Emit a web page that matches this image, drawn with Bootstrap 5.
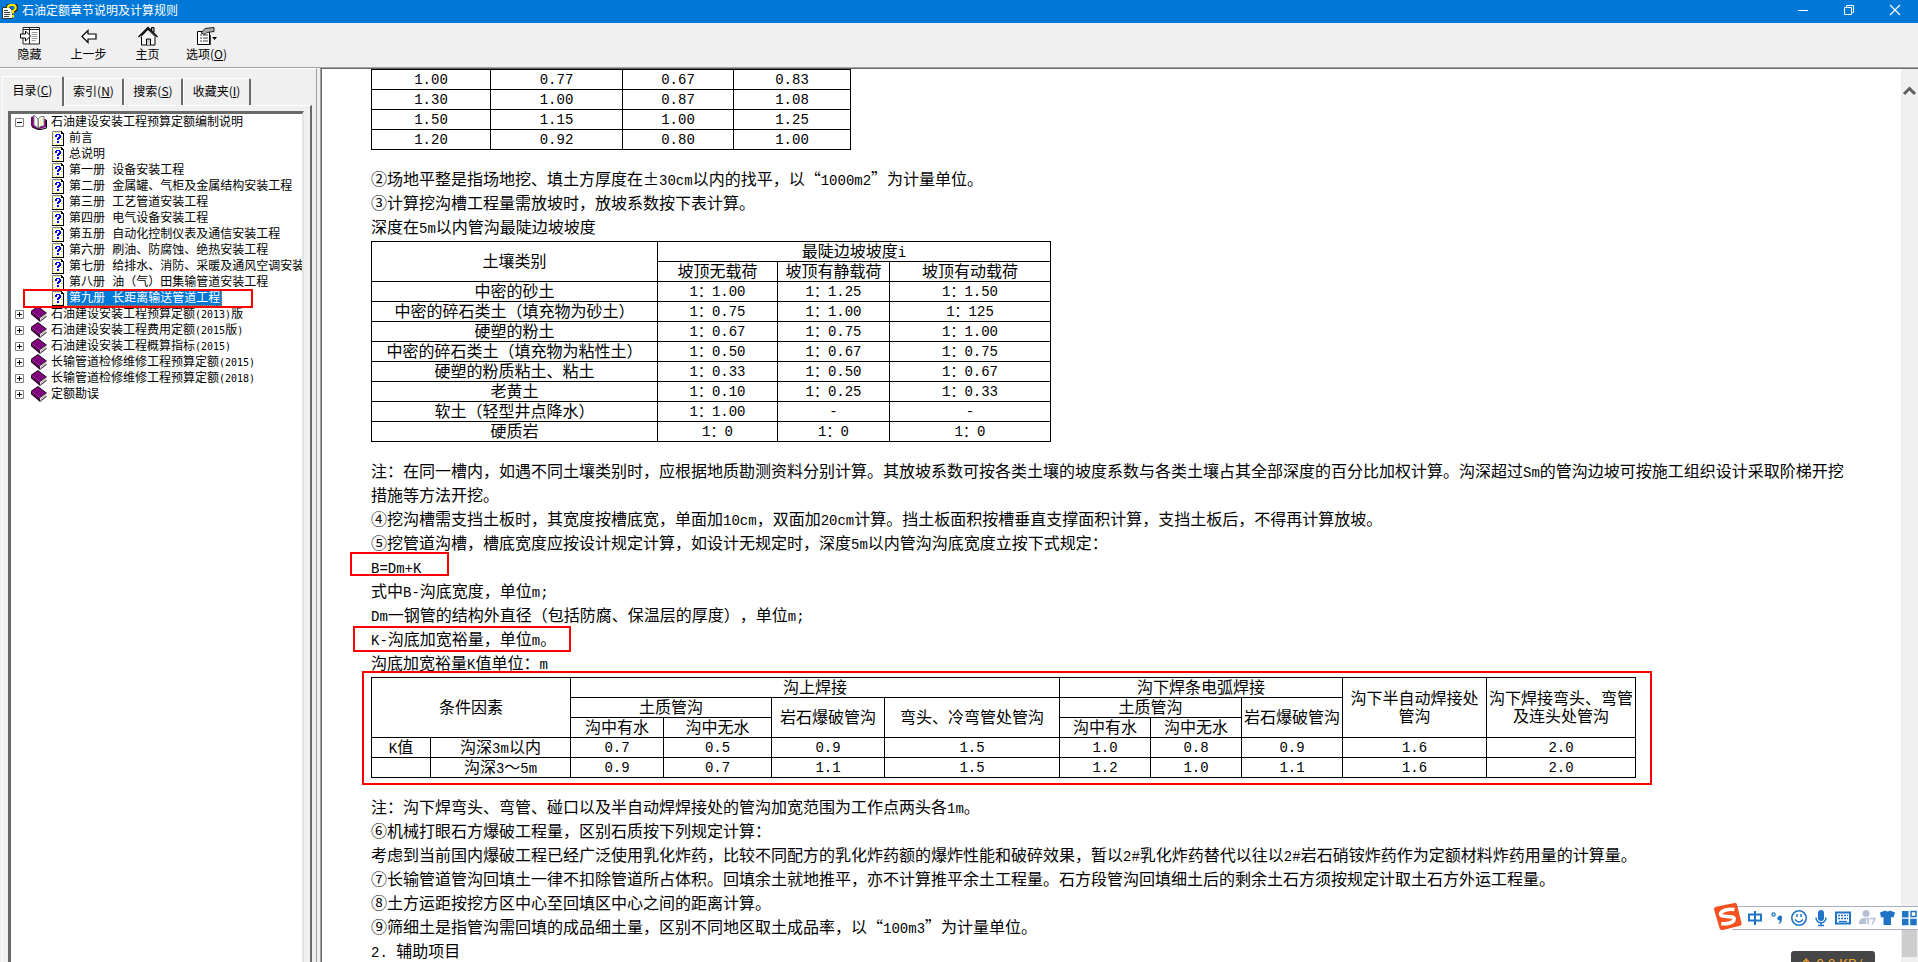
<!DOCTYPE html>
<html lang="zh-CN">
<head>
<meta charset="utf-8">
<meta name="viewport" content="width=device-width, initial-scale=1">
<title>石油定额章节说明及计算规则</title>
<link href="https://cdn.jsdelivr.net/npm/bootstrap@5.3.0/dist/css/bootstrap.min.css" rel="stylesheet">
<script src="https://cdn.jsdelivr.net/npm/bootstrap@5.3.0/dist/js/bootstrap.bundle.min.js"></script>
<style>
  :root { --face: #f0f0f0; --shade: #a0a0a0; --dark: #696969; --accent: #0078d7; }
  body { background: var(--face); color: #000; font: 12px/16px "Noto Sans CJK SC", sans-serif; text-spacing-trim: space-all; }
  button { border: 0; background: none; padding: 0; color: inherit; }
  svg { display: block; flex: none; }
  .icon-defs { position: absolute; width: 0; height: 0; }

  /* title bar and toolbar */
  .titlebar { background: var(--accent); color: #fff; height: 23px; }
  .titlebar h1 { font-size: 12px; line-height: 20px; font-weight: 400; }
  .win-btn { width: 46px; height: 20px; }
  .toolbar { height: 45px; border-bottom: 1px solid var(--shade); }
  .tool-btn { width: 59px; height: 40px; padding-top: 3px; white-space: nowrap; }

  /* navigation pane */
  .side { width: 317px; margin-right: 3px; border-top: 1px solid #fff; border-right: 1px solid var(--shade); padding: 7px 4px 0 2px; }
  .tab-btn { height: 27px; border-top: 1px solid #fff; border-right: 2px solid var(--dark); border-left: 1px solid #fff; border-radius: 2px 2px 0 0; padding-bottom: 2px; }
  .tab-btn.active { height: 30px; margin-bottom: -1px; position: relative; background: var(--face); padding-bottom: 4px; }
  .tab-a { width: 62px; } .tab-b { width: 60px; } .tab-c { width: 59px; } .tab-d { width: 68px; }
  .tab-body { border: solid #fff; border-width: 1px 0 0 1px; border-right: 2px solid var(--dark); padding: 5px 6px 0 5px; }
  .tree-box { background: #fff; border: solid var(--dark); border-width: 3px 0 0 3px; border-right: 2px solid #e3e3e3; }
  .tree-box ul { list-style: none; margin: 0; padding: 0; }
  .tree-row { display: flex; align-items: center; height: 16px; white-space: nowrap; font-family: "Liberation Mono", "Noto Sans CJK SC", monospace; }
  .tree-row a { color: #000; text-decoration: none; padding: 2px 2px 0; line-height: 14px; }
  .tree-row .book { margin: 0 2px 0 7px; }
  .tree-row .toggle { margin-left: 4px; }
  .leaf { padding-left: 41px; position: relative; }
  .leaf svg { margin-right: 3px; }
  .leaf a.active { background: var(--accent); color: #fff; outline: 1px dotted #d08030; outline-offset: -1px; }
  .num { font: 10px/14px "DejaVu Sans Mono", monospace; }

  /* document pane */
  .doc { background: #fff; border-left: 1px solid var(--shade); box-shadow: inset 1px 0 var(--dark); border-top: 1px solid var(--dark); }
  .doc-text { padding: 0 48px 0 50px; font: 16px/24px "Liberation Serif", "Noto Sans CJK SC", serif; }
  .doc-text p { margin: 0; position: relative; }
  .lat { font: 14px/14px "Liberation Mono", monospace; }
  .wide { font: 16px/16px "Noto Sans CJK SC", sans-serif; }
  .grid-table { table-layout: fixed; border-collapse: collapse; margin: 1px 0 18px; text-align: center; line-height: 18px; }
  .grid-table tr { height: 20px; }
  .grid-table th, .grid-table td { border: 1px solid #000; padding: 0; font-weight: 400; text-align: center; vertical-align: middle; }
  .factor td, .slope td + td, .margin-k td + td + td { font: 14px/18px "Liberation Mono", "Noto Sans CJK SC", monospace; }
  .factor { width: 480px; margin-top: 0; }
  .factor col:nth-child(1) { width: 119px; } .factor col:nth-child(2) { width: 132px; }
  .factor col:nth-child(3) { width: 111px; } .factor col:nth-child(4) { width: 117px; }
  .slope { width: 680px; }
  .slope col:nth-child(1) { width: 286px; } .slope col:nth-child(2) { width: 120px; }
  .slope col:nth-child(3) { width: 112px; } .slope col:nth-child(4) { width: 161px; }
  .margin-k { width: 1265px; }
  .margin-k col:nth-child(1) { width: 59px; } .margin-k col:nth-child(2) { width: 140px; }
  .margin-k col:nth-child(3) { width: 93px; } .margin-k col:nth-child(4) { width: 108px; }
  .margin-k col:nth-child(5) { width: 113px; } .margin-k col:nth-child(6) { width: 175px; }
  .margin-k col:nth-child(7), .margin-k col:nth-child(8) { width: 91px; }
  .margin-k col:nth-child(9) { width: 101px; } .margin-k col:nth-child(10) { width: 144px; }
  .margin-k col:nth-child(11) { width: 149px; }

  /* red marker frames */
  .frame { position: absolute; border: 2px solid #f00; pointer-events: none; }
  .frame-leaf { left: 12px; top: -1px; width: 230px; height: 19px; z-index: 1; }
  .frame-formula { left: -21px; top: -4px; width: 99px; height: 24px; }
  .frame-k { left: -18px; top: -2px; width: 218px; height: 26px; }
  .frame-table { left: -9px; top: -6px; width: 1290px; height: 114px; }

  .scroller { width: 17px; background: var(--face); padding-top: 17px; }
  .thumb { width: 15px; height: 28px; background: #cdcdcd; margin: auto auto 5px; }

  /* floating widgets */
  .ime { position: absolute; right: 0; bottom: 32px; width: 204px; height: 27px; }
  .ime-bar { position: absolute; inset: 3px 0 0 18px; background: #fff; border: solid #a9b0bd; border-width: 1px 0; }
  .ime svg { position: relative; }
  .speed { position: absolute; right: 43px; bottom: 0; width: 84px; height: 11px; background: #464646; border-radius: 3px 3px 0 0; color: #f5a623; font: 14px/20px "Noto Sans CJK SC", sans-serif; padding: 3px 8px 0; white-space: nowrap; overflow: hidden; }
</style>
</head>
<body class="vh-100 d-flex flex-column overflow-hidden position-relative">

<svg class="icon-defs" aria-hidden="true">
  <symbol id="page" viewBox="0 0 12 15">
    <path d="M1 1h8l2 2v11H1z" fill="#fff"/>
    <path d="M1 3.500h1M1 6.500h1M1 9.500h1M1 12.500h1M9 5.500h1M9 8.500h1M9 11.500h1M3 1.500h1M6 1.500h1M4 13.500h1M7 13.500h1" stroke="#e8e800"/>
    <path d="M.5 14V.5H9" fill="none" stroke="#808080"/>
    <path d="M9 0h1v1h1v1h1v13H0v-1h11V3H9z" fill="#000"/>
    <path d="M4 3h4v1h1v3H8v1H7v1H5V7h1V6h1V4H5v2H3V4h1zM5 10h2v2H5z" fill="#00f"/>
  </symbol>
  <symbol id="book" viewBox="0 0 16 16">
    <path d="M0 5L7 .5 15.500 7 9 11.500z" fill="#800080"/>
    <path d="M0 5v3l9 7.500v-4z" fill="#600060"/>
    <path d="M9 11.500l6.500-4.500v3.500L9 15.500z" fill="#fff"/>
    <path d="M9.500 13l6-4.200M9.500 14.300l6-4.200" stroke="#808080" stroke-width=".7"/>
    <path d="M.5 5L7 .5l8.500 6.500L9 11.500M.3 5.500v2.500L9 15.500l6.500-5" fill="none" stroke="#000" stroke-width=".8"/>
  </symbol>
  <symbol id="openbook" viewBox="0 0 16 16">
    <path d="M0 3v9l6 3h3l6-2V5h-3v7H8L3 10V2z" fill="#800080"/>
    <path d="M3 1l4 4v9L3 11z" fill="#fff" stroke="#808080"/>
    <path d="M7.500 4.500L10 2.500h3V12H10l-2.500 2z" fill="#fff" stroke="#808080"/>
    <path d="M9 6h1M11 5h1M9 9h1M11 8h1M10 11h1" stroke="#e8e800"/>
    <path d="M1 13l6 2.500h3l5.500-1.500V6" fill="none" stroke="#000"/>
  </symbol>
  <symbol id="plus" viewBox="0 0 9 9">
    <path d="M.5.5h8v8h-8z" fill="#fff" stroke="#808080"/><path d="M2 4.500h5M4.500 2v5" stroke="#000"/>
  </symbol>
  <symbol id="minus" viewBox="0 0 9 9">
    <path d="M.5.5h8v8h-8z" fill="#fff" stroke="#808080"/><path d="M2 4.500h5" stroke="#000"/>
  </symbol>
</svg>

<header class="titlebar d-flex align-items-start flex-shrink-0">
  <svg class="mt-1" width="18" height="16" viewBox="0 0 18 16" aria-hidden="true">
    <path d="M2.500 3.500h7l3 3v8h-10z" fill="#fff" stroke="#333"/>
    <path d="M4 6.500h4M4 8.500h6M4 10.500h6M4 12.500h5" stroke="#444"/>
    <path d="M8 4V2l2-1.500h4.500L16 2v3.500L13.500 7v2" fill="none" stroke="#222" stroke-width="3.500"/>
    <path d="M8 4V2.500L10 1h4l1.500 1.500V5L13 7v2.500M13 11v2.500" fill="none" stroke="#ffe800" stroke-width="2.200"/>
  </svg>
  <h1 class="mb-0 ms-1 flex-grow-1">石油定额章节说明及计算规则</h1>
  <button class="win-btn" aria-label="最小化"><svg width="46" height="20"><path d="M18 10.500h10" stroke="#fff"/></svg></button>
  <button class="win-btn" aria-label="还原"><svg width="46" height="20"><path d="M18.500 7.500h7v7h-7zM20.500 7.500v-2h7v7h-2" fill="none" stroke="#fff"/></svg></button>
  <button class="win-btn" aria-label="关闭"><svg width="46" height="20"><path d="M18 5l10 10M28 5L18 15" stroke="#fff" stroke-width="1.200"/></svg></button>
</header>

<nav class="toolbar d-flex flex-shrink-0" aria-label="工具栏">
  <button class="tool-btn d-flex flex-column align-items-center">
    <svg width="20" height="20" viewBox="0 0 20 18"><path d="M2.500.5h17v16.500h-17z" fill="#fff"/><path d="M3 7V.5h16.500v16.500H3V11M9.500.5v16.500M3 2.500h16" fill="none" stroke="#222"/><path d="M11.500 5.500h6M11.500 7.500h6M11.500 9.500h6M11.500 11.500h6M11.500 13.500h4" stroke="#999"/><path d="M.5 7h5V4l5 5-5 5v-3h-5z" fill="#fff" stroke="#000"/></svg>
    <span>隐藏</span>
  </button>
  <button class="tool-btn d-flex flex-column align-items-center">
    <svg width="16" height="20" viewBox="0 0 16 18"><path d="M1 9.500L7 3.500v3.500h8v5H7v3.500z" fill="#fff" stroke="#000" stroke-width="1.200"/></svg>
    <span>上一步</span>
  </button>
  <button class="tool-btn d-flex flex-column align-items-center">
    <svg width="20" height="20" viewBox="0 0 20 20"><path d="M3.500 9.500v9.500h13.500V9.500L10 3z" fill="#f8f8f8" stroke="#000"/><path d="M13.500 4.500v-3h2.500v5" fill="#aaa" stroke="#000"/><path d="M.5 11L10 1.500 19.500 11" fill="none" stroke="#000" stroke-width="1.300"/><path d="M2.500 11.500L10 4l7.500 7.500" fill="none" stroke="#888"/><path d="M8.500 19v-6h4v6" fill="#ccc" stroke="#000"/></svg>
    <span>主页</span>
  </button>
  <button class="tool-btn d-flex flex-column align-items-center">
    <svg width="20" height="20" viewBox="0 0 20 18"><path d="M.5 4.500h12v13H.5z" fill="#fff" stroke="#000"/><path d="M3 8h2M6 8h5M3 11h2M6 11h5M3 14h2M6 14h5M13.500 8v10" stroke="#444"/><path d="M4 6l4-4.500 9-1v4l-7 1-2 2z" fill="#aaa" stroke="#222"/><path d="M15 10h5l-2.500 3z"/></svg>
    <span>选项(<u>O</u>)</span>
  </button>
</nav>

<main class="d-flex flex-grow-1 overflow-hidden">
  <aside class="side d-flex flex-column flex-shrink-0">
    <div class="d-flex align-items-end flex-shrink-0" role="tablist">
      <button class="tab-btn tab-a active" role="tab" aria-selected="true">目录(<u>C</u>)</button>
      <button class="tab-btn tab-b" role="tab">索引(<u>N</u>)</button>
      <button class="tab-btn tab-c" role="tab">搜索(<u>S</u>)</button>
      <button class="tab-btn tab-d" role="tab">收藏夹(<u>I</u>)</button>
    </div>
    <div class="tab-body d-flex flex-grow-1">
      <div class="tree-box flex-grow-1 overflow-hidden">
        <ul>
          <li>
            <div class="tree-row"><button class="toggle" aria-label="折叠"><svg width="9" height="9"><use href="#minus"/></svg></button><svg class="book" width="16" height="16"><use href="#openbook"/></svg><a href="#">石油建设安装工程预算定额编制说明</a></div>
            <ul>
              <li class="tree-row leaf"><svg width="12" height="15"><use href="#page"/></svg><a href="#">前言</a></li>
              <li class="tree-row leaf"><svg width="12" height="15"><use href="#page"/></svg><a href="#">总说明</a></li>
              <li class="tree-row leaf"><svg width="12" height="15"><use href="#page"/></svg><a href="#">第一册 设备安装工程</a></li>
              <li class="tree-row leaf"><svg width="12" height="15"><use href="#page"/></svg><a href="#">第二册 金属罐、气柜及金属结构安装工程</a></li>
              <li class="tree-row leaf"><svg width="12" height="15"><use href="#page"/></svg><a href="#">第三册 工艺管道安装工程</a></li>
              <li class="tree-row leaf"><svg width="12" height="15"><use href="#page"/></svg><a href="#">第四册 电气设备安装工程</a></li>
              <li class="tree-row leaf"><svg width="12" height="15"><use href="#page"/></svg><a href="#">第五册 自动化控制仪表及通信安装工程</a></li>
              <li class="tree-row leaf"><svg width="12" height="15"><use href="#page"/></svg><a href="#">第六册 刷油、防腐蚀、绝热安装工程</a></li>
              <li class="tree-row leaf"><svg width="12" height="15"><use href="#page"/></svg><a href="#">第七册 给排水、消防、采暖及通风空调安装</a></li>
              <li class="tree-row leaf"><svg width="12" height="15"><use href="#page"/></svg><a href="#">第八册 油（气）田集输管道安装工程</a></li>
              <li class="tree-row leaf"><svg width="12" height="15"><use href="#page"/></svg><a href="#" class="active">第九册 长距离输送管道工程</a><span class="frame frame-leaf"></span></li>
            </ul>
          </li>
          <li class="tree-row"><button class="toggle" aria-label="展开"><svg width="9" height="9"><use href="#plus"/></svg></button><svg class="book" width="16" height="16"><use href="#book"/></svg><a href="#">石油建设安装工程预算定额<span class="num">(2013)</span>版</a></li>
          <li class="tree-row"><button class="toggle" aria-label="展开"><svg width="9" height="9"><use href="#plus"/></svg></button><svg class="book" width="16" height="16"><use href="#book"/></svg><a href="#">石油建设安装工程费用定额<span class="num">(2015</span>版<span class="num">)</span></a></li>
          <li class="tree-row"><button class="toggle" aria-label="展开"><svg width="9" height="9"><use href="#plus"/></svg></button><svg class="book" width="16" height="16"><use href="#book"/></svg><a href="#">石油建设安装工程概算指标<span class="num">(2015)</span></a></li>
          <li class="tree-row"><button class="toggle" aria-label="展开"><svg width="9" height="9"><use href="#plus"/></svg></button><svg class="book" width="16" height="16"><use href="#book"/></svg><a href="#">长输管道检修维修工程预算定额<span class="num">(2015)</span></a></li>
          <li class="tree-row"><button class="toggle" aria-label="展开"><svg width="9" height="9"><use href="#plus"/></svg></button><svg class="book" width="16" height="16"><use href="#book"/></svg><a href="#">长输管道检修维修工程预算定额<span class="num">(2018)</span></a></li>
          <li class="tree-row"><button class="toggle" aria-label="展开"><svg width="9" height="9"><use href="#plus"/></svg></button><svg class="book" width="16" height="16"><use href="#book"/></svg><a href="#">定额勘误</a></li>
        </ul>
      </div>
    </div>
  </aside>

  <section class="doc d-flex flex-grow-1 overflow-hidden">
    <article class="doc-text flex-grow-1 overflow-hidden">
      <table class="grid-table factor">
        <colgroup><col><col><col><col></colgroup>
        <tbody>
          <tr><td>1.00</td><td>0.77</td><td>0.67</td><td>0.83</td></tr>
          <tr><td>1.30</td><td>1.00</td><td>0.87</td><td>1.08</td></tr>
          <tr><td>1.50</td><td>1.15</td><td>1.00</td><td>1.25</td></tr>
          <tr><td>1.20</td><td>0.92</td><td>0.80</td><td>1.00</td></tr>
        </tbody>
      </table>
      <p>②场地平整是指场地挖、填土方厚度在<span class="wide">±</span><span class="lat">30cm</span>以内的找平，以<span class="wide">“</span><span class="lat">1000m2</span><span class="wide">”</span>为计量单位。</p>
      <p>③计算挖沟槽工程量需放坡时，放坡系数按下表计算。</p>
      <p>深度在<span class="lat">5m</span>以内管沟最陡边坡坡度</p>
      <table class="grid-table slope">
        <colgroup><col><col><col><col></colgroup>
        <thead>
          <tr><th rowspan="2">土壤类别</th><th colspan="3">最陡边坡坡度<span class="lat">i</span></th></tr>
          <tr><th>坡顶无载荷</th><th>坡顶有静载荷</th><th>坡顶有动载荷</th></tr>
        </thead>
        <tbody>
          <tr><td>中密的砂土</td><td>1：1.00</td><td>1：1.25</td><td>1：1.50</td></tr>
          <tr><td>中密的碎石类土（填充物为砂土）</td><td>1：0.75</td><td>1：1.00</td><td>1：125</td></tr>
          <tr><td>硬塑的粉土</td><td>1：0.67</td><td>1：0.75</td><td>1：1.00</td></tr>
          <tr><td>中密的碎石类土（填充物为粘性土）</td><td>1：0.50</td><td>1：0.67</td><td>1：0.75</td></tr>
          <tr><td>硬塑的粉质粘土、粘土</td><td>1：0.33</td><td>1：0.50</td><td>1：0.67</td></tr>
          <tr><td>老黄土</td><td>1：0.10</td><td>1：0.25</td><td>1：0.33</td></tr>
          <tr><td>软土（轻型井点降水）</td><td>1：1.00</td><td>-</td><td>-</td></tr>
          <tr><td>硬质岩</td><td>1：0</td><td>1：0</td><td>1：0</td></tr>
        </tbody>
      </table>
      <p>注：在同一槽内，如遇不同土壤类别时，应根据地质勘测资料分别计算。其放坡系数可按各类土壤的坡度系数与各类土壤占其全部深度的百分比加权计算。沟深超过<span class="lat">Sm</span>的管沟边坡可按施工组织设计采取阶梯开挖措施等方法开挖。</p>
      <p>④挖沟槽需支挡土板时，其宽度按槽底宽，单面加<span class="lat">10cm</span>，双面加<span class="lat">20cm</span>计算。挡土板面积按槽垂直支撑面积计算，支挡土板后，不得再计算放坡。</p>
      <p>⑤挖管道沟槽，槽底宽度应按设计规定计算，如设计无规定时，深度<span class="lat">5m</span>以内管沟沟底宽度立按下式规定：</p>
      <p><span class="lat">B=Dm+K</span><span class="frame frame-formula"></span></p>
      <p>式中<span class="lat">B-</span>沟底宽度，单位<span class="lat">m;</span></p>
      <p><span class="lat">Dm</span>一钢管的结构外直径（包括防腐、保温层的厚度），单位<span class="lat">m;</span></p>
      <p><span class="lat">K-</span>沟底加宽裕量，单位<span class="lat">m</span>。<span class="frame frame-k"></span></p>
      <p>沟底加宽裕量<span class="lat">K</span>值单位：<span class="lat">m</span></p>
      <div class="position-relative">
        <table class="grid-table margin-k">
          <colgroup><col><col><col><col><col><col><col><col><col><col><col></colgroup>
          <thead>
            <tr><th colspan="2" rowspan="3">条件因素</th><th colspan="4">沟上焊接</th><th colspan="3">沟下焊条电弧焊接</th><th rowspan="3">沟下半自动焊接处管沟</th><th rowspan="3">沟下焊接弯头、弯管及连头处管沟</th></tr>
            <tr><th colspan="2">土质管沟</th><th rowspan="2">岩石爆破管沟</th><th rowspan="2">弯头、冷弯管处管沟</th><th colspan="2">土质管沟</th><th rowspan="2">岩石爆破管沟</th></tr>
            <tr><th>沟中有水</th><th>沟中无水</th><th>沟中有水</th><th>沟中无水</th></tr>
          </thead>
          <tbody>
            <tr><td><span class="lat">K</span>值</td><td>沟深<span class="lat">3m</span>以内</td><td>0.7</td><td>0.5</td><td>0.9</td><td>1.5</td><td>1.0</td><td>0.8</td><td>0.9</td><td>1.6</td><td>2.0</td></tr>
            <tr><td></td><td>沟深<span class="lat">3</span>～<span class="lat">5m</span></td><td>0.9</td><td>0.7</td><td>1.1</td><td>1.5</td><td>1.2</td><td>1.0</td><td>1.1</td><td>1.6</td><td>2.0</td></tr>
          </tbody>
        </table>
        <span class="frame frame-table"></span>
      </div>
      <p>注：沟下焊弯头、弯管、碰口以及半自动焊焊接处的管沟加宽范围为工作点两头各<span class="lat">1m</span>。</p>
      <p>⑥机械打眼石方爆破工程量，区别石质按下列规定计算：</p>
      <p>考虑到当前国内爆破工程已经广泛使用乳化炸药，比较不同配方的乳化炸药额的爆炸性能和破碎效果，暂以<span class="lat">2#</span>乳化炸药替代以往以<span class="lat">2#</span>岩石硝铵炸药作为定额材料炸药用量的计算量。</p>
      <p>⑦长输管道管沟回填土一律不扣除管道所占体积。回填余土就地推平，亦不计算推平余土工程量。石方段管沟回填细土后的剩余土石方须按规定计取土石方外运工程量。</p>
      <p>⑧土方运距按挖方区中心至回填区中心之间的距离计算。</p>
      <p>⑨筛细土是指管沟需回填的成品细土量，区别不同地区取土成品率，以<span class="wide">“</span><span class="lat">100m3</span><span class="wide">”</span>为计量单位。</p>
      <p><span class="lat">2. </span>辅助项目</p>
    </article>
    <div class="scroller d-flex flex-column flex-shrink-0">
      <svg width="17" height="10"><path d="M3 8l5.500-5.500L14 8" fill="none" stroke="#606060" stroke-width="3"/></svg>
      <div class="thumb"></div>
    </div>
  </section>
</main>

<div class="ime">
  <div class="ime-bar"></div>
  <svg width="204" height="27" viewBox="0 0 204 27" role="img" aria-label="输入法">
    <path d="M3 3.500L20.500 0q2-.3 2.500 1.500L27.500 20q.5 2-1.500 2.800L9 27q-3 .5-3.500-2L0 6.500Q-.2 4 3 3.500z" fill="#f4511e"/>
    <path d="M20.500 6.500C15 5.500 7 7.500 6.500 11c-.3 4 13.500 1 13.700 5 0 3.800-7.700 5.500-13 4.500" fill="none" stroke="#fff" stroke-width="3.600"/>
    <g fill="none" stroke="#1f74c8" stroke-width="2">
      <path d="M35 11.500h12v6H35zM41 8v14"/>
      <circle cx="59.500" cy="11.500" r="1.600" stroke-width="1.300"/>
      <circle cx="85" cy="15" r="7.200" stroke-width="1.600"/><path d="M81 16.500q4 5 8 0" stroke-width="1.400"/><path d="M83 11v3M87 11v3" stroke-width="1.500"/>
      <path d="M102 14.500c0 7 10 7 10 0M107 20v3M104 22.500h6" stroke-width="1.600"/>
      <path d="M122 9.500h14v11h-14z"/><path d="M124 12.500h10M124 15.500h10" stroke-dasharray="2 1" stroke-width="1.500"/><path d="M125 18.500h8" stroke-width="1.300"/>
      <path d="M197 8.500h5v5h-5z" stroke-width="1.500"/>
    </g>
    <g fill="#1f74c8">
      <path d="M64 14a2 2 0 1 1 4 1.200c0 3-1 4.800-3 5.800l-.5-1c1-.6 1.500-1.500 1.500-2.600A2 2 0 0 1 64 14z"/>
      <rect x="104" y="7" width="6" height="11" rx="3"/>
      <path d="M166 9.500l5-2q2.500 2 5 0l5 2-1.500 5-2.500-.5v8h-7.500v-8l-2.500.5z"/>
      <path d="M188 8h6.500v6.500H188zM188 15.800h6.500v6.500H188zM196.200 15.800h6.500v6.500h-6.500z"/>
    </g>
    <g fill="#b4c0d4"><circle cx="152" cy="10.500" r="3.500"/><path d="M145 20q0-5 6-5h5v6h-11z"/></g>
    <path d="M152 15.500h2v6M156 15.500h5l-3 6" fill="none" stroke="#fff" stroke-width="3.500"/>
    <path d="M152 15.500h2v6M156 15.500h5l-3 6" fill="none" stroke="#b4c0d4" stroke-width="1.500"/>
  </svg>
</div>
<div class="speed">↑ 0.0 KB/s</div>

</body>
</html>
